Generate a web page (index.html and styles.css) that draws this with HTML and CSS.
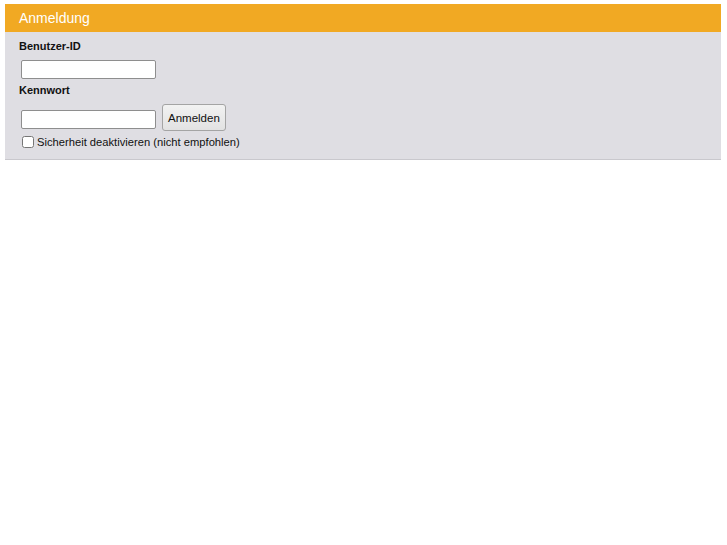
FILE: index.html
```html
<!DOCTYPE html>
<html lang="de">
<head>
    <meta charset="UTF-8">
    <title>Anmeldung</title>
    <link rel="stylesheet" href="styles.css">
</head>
<body>
    <div class="login-box">
        <div class="login-header">Anmeldung</div>
        <form class="login-form">
            <label class="field-label" for="userId">Benutzer-ID</label>
            <div class="field-row">
                <input type="text" class="text-field" id="userId">
            </div>
            <label class="field-label" for="password">Kennwort</label>
            <div class="field-row field-row-submit">
                <input type="password" class="text-field" id="password">
                <button type="button" class="submit-btn">Anmelden</button>
            </div>
            <label class="check-row">
                <input type="checkbox" class="check-box">
                <span>Sicherheit deaktivieren (nicht empfohlen)</span>
            </label>
        </form>
    </div>
</body>
</html>
```

FILE: styles.css
```css
* {
    box-sizing: border-box;
}

body {
    margin: 4px 6px 0 5px;
    font-family: "Liberation Sans", Arial, sans-serif;
    background-color: #ffffff;
}

.login-box {
    background-color: #dfdee3;
    border-bottom: 1px solid #c9c8cd;
}

.login-header {
    background-color: #f1a923;
    color: #ffffff;
    font-size: 14px;
    height: 28px;
    line-height: 28px;
    padding-left: 14px;
}

.login-form {
    margin: 0;
    padding: 8px 14px 11px 14px;
}

.field-label {
    display: block;
    font-size: 11px;
    font-weight: bold;
    line-height: 13px;
    color: #111111;
}

.field-row {
    display: flex;
    align-items: flex-start;
    gap: 6px;
    padding-left: 2px;
    margin: 7px 0 5px 0;
}

.field-row-submit {
    margin: 7px 0 5px 0;
}

.text-field {
    width: 135px;
    height: 19px;
    margin: 0;
    border: 1px solid #8e8e8e;
    border-radius: 2px;
    background-color: #ffffff;
    font-size: 11px;
}

.field-row-submit .text-field {
    margin-top: 6px;
}

.submit-btn {
    height: 27px;
    padding: 0 5px;
    margin: 0;
    font-family: "Liberation Sans", Arial, sans-serif;
    font-size: 11.5px;
    color: #111111;
    background: linear-gradient(#f2f2f2, #e2e2e2);
    border: 1px solid #a4a4a4;
    border-radius: 3px;
}

.check-row {
    display: flex;
    align-items: center;
    gap: 3px;
    padding-left: 3px;
    font-size: 11.2px;
    color: #111111;
}

.check-box {
    width: 12px;
    height: 12px;
    margin: 0;
}
```
